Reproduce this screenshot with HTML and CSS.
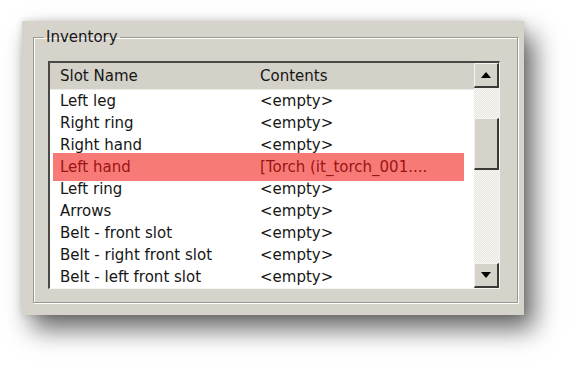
FILE: index.html
```html
<!DOCTYPE html>
<html lang="en">
<head>
    <meta charset="UTF-8">
    <meta name="viewport" content="width=device-width, initial-scale=1.0">
    <title>Inventory</title>
    <link rel="stylesheet" href="styles.css">
</head>
<body>
    <div class="dialog">
        <fieldset class="groupbox">
            <legend>Inventory</legend>
            <div class="listview">
                <div class="list">
                    <div class="list-header">
                        <span class="col-slot">Slot Name</span>
                        <span class="col-contents">Contents</span>
                    </div>
                    <div class="row"><span class="col-slot">Left leg</span><span class="col-contents">&lt;empty&gt;</span></div>
                    <div class="row"><span class="col-slot">Right ring</span><span class="col-contents">&lt;empty&gt;</span></div>
                    <div class="row"><span class="col-slot">Right hand</span><span class="col-contents">&lt;empty&gt;</span></div>
                    <div class="row selected"><span class="col-slot">Left hand</span><span class="col-contents">[Torch (it_torch_001....</span></div>
                    <div class="row"><span class="col-slot">Left ring</span><span class="col-contents">&lt;empty&gt;</span></div>
                    <div class="row"><span class="col-slot">Arrows</span><span class="col-contents">&lt;empty&gt;</span></div>
                    <div class="row"><span class="col-slot">Belt - front slot</span><span class="col-contents">&lt;empty&gt;</span></div>
                    <div class="row"><span class="col-slot">Belt - right front slot</span><span class="col-contents">&lt;empty&gt;</span></div>
                    <div class="row"><span class="col-slot">Belt - left front slot</span><span class="col-contents">&lt;empty&gt;</span></div>
                </div>
                <div class="scrollbar">
                    <div class="sb-btn"><span class="arrow-up"></span></div>
                    <div class="sb-track sb-track-top"></div>
                    <div class="sb-thumb"></div>
                    <div class="sb-track sb-track-bottom"></div>
                    <div class="sb-btn"><span class="arrow-down"></span></div>
                </div>
            </div>
        </fieldset>
    </div>
</body>
</html>
```

FILE: styles.css
```css
* {
    margin: 0;
    padding: 0;
    box-sizing: border-box;
}

body {
    min-height: 100vh;
    padding: 21px 0 0 22px;
    background: #fff;
    font-family: 'DejaVu Sans', Tahoma, sans-serif;
    font-size: 15px;
    color: #161616;
}

.dialog {
    width: 502px;
    height: 294px;
    padding: 7px 6px 0 11px;
    background: #d6d3cb;
    box-shadow: 10px 14px 24px rgba(0, 0, 0, 0.6), 0 0 7px rgba(0, 0, 0, 0.15);
}

.groupbox {
    height: 275px;
    border: 1px solid #9a978f;
    box-shadow: inset 1px 1px 0 #fff, 1px 1px 0 #fff;
    padding: 15px 17px 9px 14px;
}

.groupbox legend {
    margin-left: -4px;
    padding: 0 2px;
    line-height: 18px;
}

.listview {
    display: flex;
    height: 228px;
    background: #fff;
    border-style: solid;
    border-width: 2px 1px 1px 2px;
    border-color: #4a4844 #f4f3f0 #f4f3f0 #4a4844;
}

.list {
    flex: 1;
}

.list-header,
.row {
    display: flex;
    align-items: center;
}

.list-header {
    height: 27px;
    background: #d4d1c9;
    border-bottom: 1px solid #ecebe7;
}

.row {
    height: 22px;
}

.col-slot {
    width: 200px;
    padding-left: 10px;
    white-space: nowrap;
}

.col-contents {
    padding-left: 10px;
    white-space: nowrap;
}

.row.selected {
    height: 28px;
    margin: -3px 10px -3px 3px;
    background: #f87a76;
    color: #9a1414;
}

.row.selected .col-slot {
    width: 197px;
    padding-left: 7px;
}

.scrollbar {
    width: 25px;
    display: flex;
    flex-direction: column;
}

.sb-btn,
.sb-thumb {
    background: #d6d3cb;
    border-style: solid;
    border-width: 1px 2px 2px 1px;
    border-color: #f4f3f0 #3c3a37 #3c3a37 #f4f3f0;
}

.sb-btn {
    height: 25px;
    display: flex;
    align-items: center;
    justify-content: center;
}

.sb-thumb {
    height: 52px;
}

.sb-track {
    background: repeating-conic-gradient(#e8e6e1 0 25%, #f7f6f3 0 50%) 0 0 / 2px 2px;
}

.sb-track-top {
    height: 30px;
}

.sb-track-bottom {
    flex: 1;
}

.arrow-up,
.arrow-down {
    width: 0;
    height: 0;
    border-left: 5px solid transparent;
    border-right: 5px solid transparent;
}

.arrow-up {
    border-bottom: 6px solid #000;
}

.arrow-down {
    border-top: 6px solid #000;
}
```
